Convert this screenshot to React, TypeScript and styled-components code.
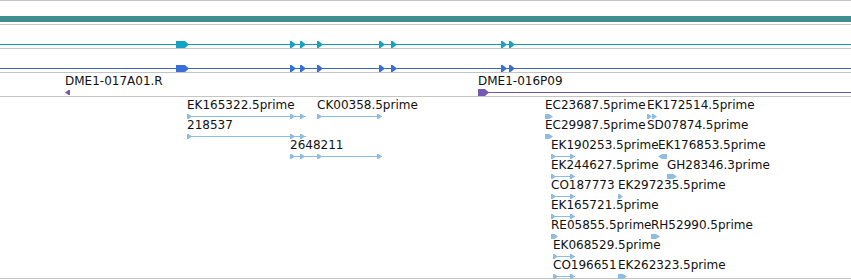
import React from "react";
import styled, { createGlobalStyle } from "styled-components";

type Block = { x: number; w: number; dir?: "l" | "r" };

type Feat = {
  label?: string;
  start: number;
  end: number;
  row?: number;
  blocks: Block[];
  line?: boolean;
};

type TrackDef = {
  height: number;
  color: string;
  block: string;
  tall?: boolean;
  feats: Feat[];
};

const GlobalStyle = createGlobalStyle`
  html, body {
    margin: 0;
    padding: 0;
    background: #ffffff;
  }
  body {
    font-family: "DejaVu Sans", Verdana, sans-serif;
  }
`;

const Browser = styled.div`
  width: 851px;
  height: 280px;
  overflow: hidden;
  border-top: 1px solid #c4c4c4;
`;

const Track = styled.div<{ $h: number }>`
  position: relative;
  height: ${(p) => p.$h}px;
  border-bottom: 1px solid #c4c4c4;
`;

const OverviewTrack = styled(Track)`
  padding-top: 15px;
`;

const OverviewBar = styled.div`
  height: 6px;
  background: #3f8f91;
`;

const Feature = styled.div<{ $x: number; $row: number }>`
  position: absolute;
  left: ${(p) => p.$x}px;
  top: ${(p) => 1 + p.$row * 20}px;
  display: flex;
  flex-direction: column;
  gap: 1px;
`;

const Label = styled.span`
  height: 14px;
  font-size: 12px;
  line-height: 14px;
  color: #111;
  white-space: nowrap;
`;

const Glyph = styled.svg`
  display: block;
  overflow: visible;
`;

// exon block drawn as a flag with a pointed end
const shape = (b: Block, start: number, top: number, bottom: number) => {
  const x0 = b.x - start;
  const x1 = x0 + b.w;
  const tip = b.w <= 6 ? b.w - 1.5 : Math.min(4, b.w / 2);
  const mid = (top + bottom) / 2;
  if (b.dir === "l") {
    return `${x1},${top} ${x0 + tip},${top} ${x0},${mid} ${x0 + tip},${bottom} ${x1},${bottom}`;
  }
  return `${x0},${top} ${x1 - tip},${top} ${x1},${mid} ${x1 - tip},${bottom} ${x0},${bottom}`;
};

const FeatureGlyph = ({ f, color, block, tall }: { f: Feat; color: string; block: string; tall?: boolean }) => {
  const w = Math.max(f.end - f.start, 1);
  return (
    <Glyph width={w} height={7}>
      {f.line !== false && <rect x={0} y={3} width={w} height={1} fill={color} />}
      {f.blocks.map((b, i) => {
        const big = tall || b.w > 10;
        return (
          <polygon
            key={i}
            points={shape(b, f.start, big ? 0 : 1, big ? 7 : 6)}
            fill={block}
          />
        );
      })}
    </Glyph>
  );
};

const exons = (xs: number[], w = 6): Block[] => xs.map((x) => ({ x, w }));

const geneBlocks: Block[] = [
  { x: 176, w: 13 },
  ...exons([290, 300, 317, 379, 391, 501, 509]),
];

const EST = "#8dbde2";

const tracks: TrackDef[] = [
  {
    height: 23,
    color: "#1b98b4",
    block: "#16a2c4",
    tall: true,
    feats: [{ start: 0, end: 851, blocks: geneBlocks }],
  },
  {
    height: 23,
    color: "#3a68c6",
    block: "#366fd8",
    tall: true,
    feats: [{ start: 0, end: 851, blocks: geneBlocks }],
  },
  {
    height: 23,
    color: "#6c56a6",
    block: "#7559b4",
    feats: [
      { label: "DME1-017A01.R", start: 65, end: 70, blocks: [{ x: 65, w: 5, dir: "l" }], line: false },
      { label: "DME1-016P09", start: 478, end: 860, blocks: [{ x: 478, w: 11 }] },
    ],
  },
  {
    height: 181,
    color: EST,
    block: EST,
    feats: [
      { label: "EK165322.5prime", row: 0, start: 187, end: 306, blocks: exons([187, 290, 300], 5) },
      { label: "CK00358.5prime", row: 0, start: 317, end: 382, blocks: exons([317, 377], 5) },
      { label: "EC23687.5prime", row: 0, start: 545, end: 553, blocks: [{ x: 545, w: 8 }], line: false },
      { label: "EK172514.5prime", row: 0, start: 647, end: 657, blocks: exons([647, 652], 5), line: false },
      { label: "218537", row: 1, start: 187, end: 306, blocks: exons([187, 290, 300], 5) },
      { label: "EC29987.5prime", row: 1, start: 545, end: 553, blocks: [{ x: 545, w: 8 }], line: false },
      { label: "SD07874.5prime", row: 1, start: 647, end: 647, blocks: [], line: false },
      { label: "2648211", row: 2, start: 290, end: 382, blocks: exons([290, 300, 317, 377], 5) },
      { label: "EK190253.5prime", row: 2, start: 551, end: 575, blocks: exons([551, 570], 5) },
      { label: "EK176853.5prime", row: 2, start: 658, end: 667, blocks: [{ x: 658, w: 9, dir: "l" }], line: false },
      { label: "EK244627.5prime", row: 3, start: 551, end: 575, blocks: exons([551, 570], 5) },
      { label: "GH28346.3prime", row: 3, start: 667, end: 677, blocks: [{ x: 667, w: 10 }], line: false },
      { label: "CO187773", row: 4, start: 551, end: 575, blocks: exons([551, 570], 5) },
      { label: "EK297235.5prime", row: 4, start: 618, end: 623, blocks: [{ x: 618, w: 5 }], line: false },
      { label: "EK165721.5prime", row: 5, start: 551, end: 575, blocks: exons([551, 570], 5) },
      { label: "RE05855.5prime", row: 6, start: 551, end: 558, blocks: [{ x: 551, w: 7 }], line: false },
      { label: "RH52990.5prime", row: 6, start: 651, end: 660, blocks: [{ x: 651, w: 9 }], line: false },
      { label: "EK068529.5prime", row: 7, start: 553, end: 575, blocks: exons([553, 570], 5) },
      { label: "CO196651", row: 8, start: 553, end: 575, blocks: exons([553, 570], 5) },
      { label: "EK262323.5prime", row: 8, start: 618, end: 627, blocks: [{ x: 618, w: 9 }], line: false },
    ],
  },
];

const App = () => {
  return (
    <>
      <GlobalStyle />
      <Browser>
        <OverviewTrack $h={8}>
          <OverviewBar />
        </OverviewTrack>
        {tracks.map((t, ti) => (
          <Track $h={t.height} key={ti}>
            {t.feats.map((f, fi) => (
              <Feature $x={f.start} $row={f.row ?? 0} key={fi}>
                <Label>{f.label ?? ""}</Label>
                {f.blocks.length > 0 && (
                  <FeatureGlyph f={f} color={t.color} block={t.block} tall={t.tall} />
                )}
              </Feature>
            ))}
          </Track>
        ))}
      </Browser>
    </>
  );
};

export default App;
